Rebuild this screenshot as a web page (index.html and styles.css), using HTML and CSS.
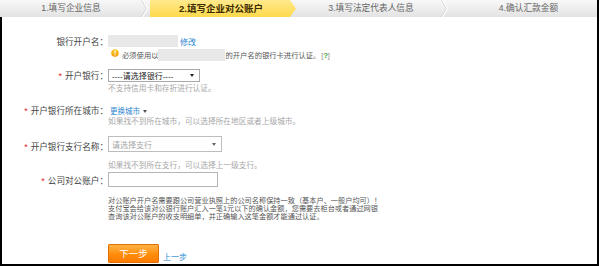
FILE: index.html
```html
<!DOCTYPE html>
<html lang="zh-CN">
<head>
<meta charset="utf-8">
<title>填写企业对公账户</title>
<link rel="stylesheet" href="styles.css">
</head>
<body>
<div class="page">
  <div class="steps">
    <div class="step s1">1.填写企业信息<svg class="sep" width="7" height="17" viewBox="0 0 7 17"><polyline points="0.5,0 5.5,8.5 0.5,17" fill="none" stroke="#cfcfcf" stroke-width="1"/><polyline points="1.5,0 6.5,8.5 1.5,17" fill="none" stroke="#ffffff" stroke-width="1.2"/></svg></div>
    <div class="step active">2.填写企业对公账户</div>
    <div class="step s3">3.填写法定代表人信息<svg class="sep" width="7" height="17" viewBox="0 0 7 17"><polyline points="0.5,0 5.5,8.5 0.5,17" fill="none" stroke="#cfcfcf" stroke-width="1"/><polyline points="1.5,0 6.5,8.5 1.5,17" fill="none" stroke="#ffffff" stroke-width="1.2"/></svg></div>
    <div class="step s4">4.确认汇款金额</div>
  </div>
  <div class="form">
    <div class="row r1">
      <div class="label">银行开户名：</div>
      <div class="field"><span class="mask m1"></span><a class="link">修改</a></div>
    </div>
    <div class="row r2 indent">
      <svg class="warn" width="8" height="8" viewBox="0 0 8 8"><defs><linearGradient id="wg" x1="0" y1="0" x2="0" y2="1"><stop offset="0" stop-color="#ffcc33"/><stop offset="1" stop-color="#f39a00"/></linearGradient></defs><circle cx="4" cy="4" r="3.8" fill="url(#wg)"/><rect x="3.4" y="1.6" width="1.2" height="3" fill="#fff"/><rect x="3.4" y="5.3" width="1.2" height="1.1" fill="#fff"/></svg>
      <span class="warntext">必须使用以</span><span class="mask m2"></span><span class="warntext">的开户名的银行卡进行认证。</span><span class="help">[<b>?</b>]</span>
    </div>
    <div class="row r3">
      <div class="label"><span class="req">*</span>开户银行：</div>
      <div class="select sel1"><span>----请选择银行----</span><i class="tri"></i></div>
    </div>
    <div class="hint h1 indent">不支持信用卡和存折进行认证。</div>
    <div class="row r4">
      <div class="label"><span class="req">*</span>开户银行所在城市：</div>
      <a class="link city">更换城市<i class="tri small"></i></a>
    </div>
    <div class="hint h2 indent">如果找不到所在城市，可以选择所在地区或者上级城市。</div>
    <div class="row r5">
      <div class="label"><span class="req">*</span>开户银行支行名称：</div>
      <div class="select sel2"><span class="ph">请选择支行</span><i class="tri grey"></i></div>
    </div>
    <div class="hint h3 indent">如果找不到所在支行，可以选择上一级支行。</div>
    <div class="row r6">
      <div class="label"><span class="req">*</span>公司对公账户：</div>
      <div class="input"></div>
    </div>
    <p class="note indent">对公账户开户名需要跟公司营业执照上的公司名称保持一致（基本户、一般户均可）！<br>支付宝会给该对公银行账户汇入一笔1元以下的确认金额，您需要去柜台或者通过网银<br>查询该对公账户的收支明细单，并正确输入这笔金额才能通过认证。</p>
    <div class="row actions indent">
      <button class="btn" type="button">下一步</button>
      <a class="link prev">上一步</a>
    </div>
  </div>
</div>
</body>
</html>
```

FILE: styles.css
```css
body {
  margin: 0;
  background: #fff;
  font-family: "Liberation Sans", "Noto Sans CJK SC", sans-serif;
  color: #333;
}

.page {
  width: 597px;
  border-right: 2px solid #000;
}

.steps {
  display: flex;
  height: 17px;
  background: linear-gradient(#f8f8f8, #e3e3e3);
}

.step {
  position: relative;
  width: 150px;
  box-sizing: border-box;
  line-height: 17px;
  text-align: center;
  font-size: 8.7px;
  color: #666;
  white-space: nowrap;
}

.s1, .s3 {
  padding-right: 8px;
}

.s4 {
  width: 147px;
  padding-left: 10px;
}

.step.active {
  background: linear-gradient(#ffe98c, #ffd94c);
  clip-path: polygon(0 0, 140px 0, 146px 50%, 140px 100%, 0 100%);
  font-weight: bold;
  font-size: 9.5px;
  color: #3b2b00;
  padding-right: 8px;
}

.sep {
  position: absolute;
  left: 141px;
  top: 0;
}

.form {
  box-sizing: border-box;
  height: 249px;
  padding-top: 17px;
  border-left: 2px solid #000;
  border-bottom: 2px solid #000;
}

.row {
  display: flex;
  align-items: center;
}

.label {
  width: 106px;
  flex: none;
  text-align: right;
  font-size: 8.6px;
  color: #444;
  white-space: nowrap;
}

.req {
  color: #e2262a;
  font-size: 9px;
  margin-right: 3px;
}

.indent {
  margin-left: 106px;
}

.field {
  display: flex;
  align-items: center;
}

.mask {
  display: inline-block;
  background: #e8e8e8;
}

.m1 {
  width: 70px;
  height: 12px;
}

.m2 {
  width: 67px;
  height: 12px;
}

.link {
  color: #2b86cf;
  font-size: 8px;
  cursor: pointer;
}

.r1 {
  height: 14px;
}

.r1 .link {
  margin-left: 2px;
}

.r2 {
  height: 14px;
  font-size: 7.3px;
  color: #555;
  white-space: nowrap;
}

.warn {
  margin-left: 3px;
  margin-right: 3px;
  position: relative;
  top: -2px;
}

.help {
  color: #888;
  margin-left: 1px;
}

.help b {
  color: #3a9a2a;
}

.r3 {
  margin-top: 6px;
  height: 14px;
}

.select {
  box-sizing: border-box;
  display: flex;
  align-items: center;
  justify-content: space-between;
  border: 1px solid #a9a9a9;
  background: #fff;
  padding: 0 5px 0 3px;
  white-space: nowrap;
}

.sel1 {
  width: 92px;
  height: 13px;
  font-size: 8px;
  color: #222;
}

.sel2 {
  width: 114px;
  height: 16px;
  font-size: 8px;
  border-color: #bdbdbd;
}

.ph {
  color: #a5a5a5;
}

.tri {
  display: inline-block;
  width: 0;
  height: 0;
  border-left: 2.5px solid transparent;
  border-right: 2.5px solid transparent;
  border-top: 3px solid #222;
}

.tri.grey {
  border-top-color: #666;
}

.tri.small {
  margin-left: 3px;
  vertical-align: middle;
  border-top-color: #555;
}

.hint {
  font-size: 7.7px;
  color: #a8a8a8;
  white-space: nowrap;
}

.h1 {
  height: 14px;
  line-height: 14px;
}

.r4 {
  margin-top: 7px;
  height: 14px;
}

.city {
  margin-left: 2px;
  font-size: 7.5px;
}

.h2 {
  height: 10px;
  line-height: 10px;
}

.r5 {
  margin-top: 9px;
  height: 16px;
}

.r5 .label {
  position: relative;
  top: 2px;
}

.h3 {
  margin-top: 9px;
  height: 10px;
  line-height: 10px;
}

.r6 {
  margin-top: 1px;
  height: 15px;
}

.input {
  box-sizing: border-box;
  width: 110px;
  height: 15px;
  border: 1px solid #b5b5b5;
  background: #fff;
}

.note {
  margin-top: 10px;
  margin-bottom: 0;
  margin-right: 0;
  font-size: 7.2px;
  line-height: 7.8px;
  color: #555;
  white-space: nowrap;
}

.actions {
  margin-top: 23.6px;
  height: 19px;
  align-items: flex-end;
}

.btn {
  box-sizing: border-box;
  width: 51px;
  height: 19px;
  padding: 0;
  border: 1px solid #e26f00;
  border-radius: 1px;
  background: linear-gradient(#ffb347, #ff8c0a 55%, #ff7d00);
  color: #fff;
  font-family: "Liberation Sans", "Noto Sans CJK SC", sans-serif;
  font-size: 9.5px;
  line-height: 15px;
}

.prev {
  margin-left: 4px;
  margin-bottom: 1px;
}
```
